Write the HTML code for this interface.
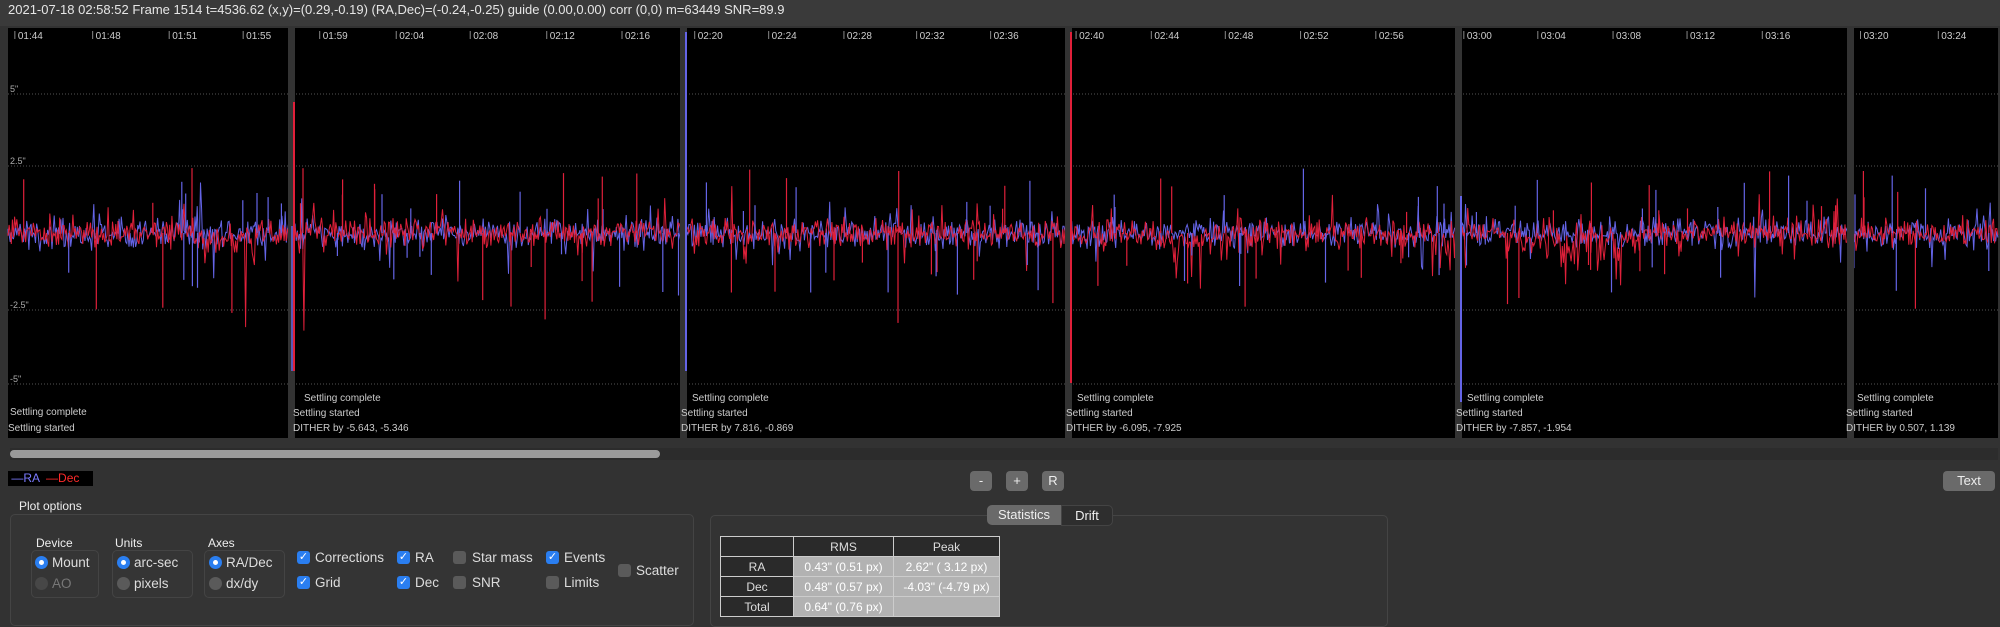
<!DOCTYPE html>
<html><head><meta charset="utf-8"><style>
body{margin:0;width:2000px;height:617px;background:#323232;overflow:hidden;font-family:"Liberation Sans",sans-serif;color:#ddd;position:relative}
.a{position:absolute}
.top{left:0;top:0;width:2000px;height:26px;background:#3a3a3a;font-size:13px;line-height:20px;padding-left:8px;color:#e6e6e6}
.btn{position:absolute;background:#6a6a6a;border-radius:4px;color:#eee;font-size:13px;text-align:center;line-height:20px;height:20px}
.lbl{position:absolute;font-size:12px;color:#eee}
.grp{position:absolute;border:1px solid #444;border-radius:5px;background:#353535}
.rad{position:absolute;width:13px;height:13px;border-radius:50%;background:#2a7ef0}
.rad::after{content:"";position:absolute;left:4px;top:4px;width:5px;height:5px;border-radius:50%;background:#fff}
.rad.off{background:#5a5a5a}.rad.off::after{display:none}
.chk{position:absolute;width:13px;height:13px;border-radius:3px;background:#2a7ef0;color:#fff;font-size:11px;line-height:13px;text-align:center}
.chk.off{background:#5a5a5a}
.t{position:absolute;font-size:13.5px;color:#ddd}
table{position:absolute;left:720px;top:536px;border-collapse:collapse;font-size:12px}
td{border:1px solid #ccc;height:19px;text-align:center;padding:0}
</style></head><body>
<div class="a top">2021-07-18 02:58:52 Frame 1514 t=4536.62 (x,y)=(0.29,-0.19) (RA,Dec)=(-0.24,-0.25) guide (0.00,0.00) corr (0,0) m=63449 SNR=89.9</div>
<svg class="a" style="left:0;top:26px" width="2000" height="420" id="plot"></svg>
<div class="a" style="left:10px;top:448px;width:1988px;height:12px;background:#2c2c2c"></div>
<div class="a" style="left:10px;top:450px;width:650px;height:8px;background:#9a9a9a;border-radius:4px"></div>
<div class="a" style="left:8px;top:471px;width:85px;height:15px;background:#000;font-size:12px;line-height:15px"><span style="color:#7b7bff">&nbsp;—RA</span> <span style="color:#ff2a2a">&nbsp;—Dec</span></div>
<div class="btn" style="left:970px;top:471px;width:22px">-</div>
<div class="btn" style="left:1006px;top:471px;width:22px">+</div>
<div class="btn" style="left:1042px;top:471px;width:22px">R</div>
<div class="btn" style="left:1943px;top:471px;width:52px">Text</div>
<div class="lbl" style="left:19px;top:499px">Plot options</div>
<div class="grp" style="left:10px;top:514px;width:682px;height:110px;background:#343434"></div>
<div class="lbl" style="left:36px;top:536px">Device</div>
<div class="lbl" style="left:115px;top:536px">Units</div>
<div class="lbl" style="left:208px;top:536px">Axes</div>
<div class="grp" style="left:31px;top:550px;width:66px;height:46px"></div>
<div class="grp" style="left:112px;top:550px;width:79px;height:46px"></div>
<div class="grp" style="left:204px;top:550px;width:79px;height:46px"></div>
<div class="rad" style="left:35px;top:556px"></div><div class="t" style="left:52px;top:555px">Mount</div>
<div class="rad off" style="left:35px;top:577px;opacity:.5"></div><div class="t" style="left:52px;top:576px;color:#777">AO</div>
<div class="rad" style="left:117px;top:556px"></div><div class="t" style="left:134px;top:555px">arc-sec</div>
<div class="rad off" style="left:117px;top:577px"></div><div class="t" style="left:134px;top:576px">pixels</div>
<div class="rad" style="left:209px;top:556px"></div><div class="t" style="left:226px;top:555px">RA/Dec</div>
<div class="rad off" style="left:209px;top:577px"></div><div class="t" style="left:226px;top:576px">dx/dy</div>
<div class="chk" style="left:297px;top:551px">✓</div><div class="t" style="left:315px;top:550px">Corrections</div>
<div class="chk" style="left:297px;top:576px">✓</div><div class="t" style="left:315px;top:575px">Grid</div>
<div class="chk" style="left:397px;top:551px">✓</div><div class="t" style="left:415px;top:550px">RA</div>
<div class="chk" style="left:397px;top:576px">✓</div><div class="t" style="left:415px;top:575px">Dec</div>
<div class="chk off" style="left:453px;top:551px"></div><div class="t" style="left:472px;top:550px">Star mass</div>
<div class="chk off" style="left:453px;top:576px"></div><div class="t" style="left:472px;top:575px">SNR</div>
<div class="chk" style="left:546px;top:551px">✓</div><div class="t" style="left:564px;top:550px">Events</div>
<div class="chk off" style="left:546px;top:576px"></div><div class="t" style="left:564px;top:575px">Limits</div>
<div class="chk off" style="left:618px;top:564px"></div><div class="t" style="left:636px;top:563px">Scatter</div>
<div class="grp" style="left:710px;top:515px;width:676px;height:110px;background:#333"></div>
<div class="btn" style="left:987px;top:505px;width:74px;border-radius:5px 0 0 5px;font-size:13px">Statistics</div>
<div class="btn" style="left:1061px;top:505px;width:50px;background:#2e2e2e;border:1px solid #444;border-radius:0 5px 5px 0;height:19px">Drift</div>
<table>
<tr><td style="width:72px;background:#2a2a2a"></td><td style="width:99px;background:#2a2a2a;color:#ddd">RMS</td><td style="width:105px;background:#2a2a2a;color:#ddd">Peak</td></tr>
<tr><td style="background:#2a2a2a">RA</td><td style="background:#b2b2b2;color:#fff">0.43" (0.51 px)</td><td style="background:#b2b2b2;color:#fff">2.62" ( 3.12 px)</td></tr>
<tr><td style="background:#2a2a2a">Dec</td><td style="background:#b2b2b2;color:#fff">0.48" (0.57 px)</td><td style="background:#b2b2b2;color:#fff">-4.03" (-4.79 px)</td></tr>
<tr><td style="background:#2a2a2a">Total</td><td style="background:#b2b2b2;color:#fff">0.64" (0.76 px)</td><td style="background:#b2b2b2"></td></tr>
</table>
<script>
(function(){
var s=document.getElementById('plot'),h='';
h+='<rect x="8" y="2" width="1990" height="410" fill="#000"/>';
[94,166,310,384].forEach(function(y){h+='<line x1="8" x2="1998" y1="'+(y-26)+'" y2="'+(y-26)+'" stroke="#555" stroke-dasharray="1,2"/>';});
var yl=[[94,'5"'],[166,'2.5"'],[310,'-2.5"'],[384,'-5"']];
yl.forEach(function(a){h+='<text x="10" y="'+(a[0]-26-2)+'" fill="#aaa" font-size="9">'+a[1]+'</text>';});
var ticks=[[14,'01:44'],[75,'01:48'],[135,'01:51'],[193,'01:55'],[253,'01:59'],[313,'02:04'],[371,'02:08'],[431,'02:12'],[490,'02:16'],[547,'02:20'],[605,'02:24'],[664,'02:28'],[721,'02:32'],[779,'02:36'],[846,'02:40'],[905,'02:44'],[963,'02:48'],[1022,'02:52'],[1081,'02:56'],[1150,'03:00'],[1208,'03:04'],[1267,'03:08'],[1325,'03:12'],[1384,'03:16'],[1461,'03:20'],[1522,'03:24']];
ticks.forEach(function(t){var x=t[0]*1.2755;h+='<line x1="'+(x-3)+'" x2="'+(x-3)+'" y1="5" y2="13" stroke="#888"/><text x="'+x+'" y="13" fill="#ccc" font-size="10">'+t[1]+'</text>';});
var seed=7;function r(){seed=(seed*16807)%2147483647;return seed/2147483647;}
function g(){return (r()+r()+r()-1.5);}
var cy=207;
function path(col,amp,bias){var d='M8 '+cy;for(var x=8;x<1998;x+=1.1){var v=g()*amp;if(r()<0.07)v*=2.8;if(r()<0.015)v*=2;
var cl=0;[[230,25],[1580,60],[1200,30],[1450,20],[1180,25]].forEach(function(c){if(Math.abs(x-c[0])<c[1]&&r()<0.5)cl=1;});
if(cl&&bias)v=Math.abs(v)*2.4;d+='L'+x.toFixed(1)+' '+(cy+v).toFixed(1);}return '<path d="'+d+'" fill="none" stroke="'+col+'" stroke-width="1"/>';}
h+=path('#6464e6',14,0);h+=path('#e0203a',14,1);
// extra spikes
for(var i=0;i<140;i++){var x=10+r()*1985;var up=r()<0.5;var L=20+r()*45;var col=r()<0.5?'#6464e6':'#e0203a';
if(col=='#e0203a'&&!up)L*=1.4;h+='<line x1="'+x.toFixed(1)+'" x2="'+x.toFixed(1)+'" y1="'+cy+'" y2="'+(up?cy-L:cy+L).toFixed(1)+'" stroke="'+col+'" stroke-width="1.2"/>';}
[292,684,1069,1459,1851].forEach(function(x){h+='<rect x="'+(x-4)+'" y="0" width="7" height="412" fill="#333"/>';});
h+='<line x1="294" x2="294" y1="76" y2="345" stroke="#e0203a" stroke-width="2"/>';
h+='<line x1="686" x2="686" y1="6" y2="345" stroke="#6464e6" stroke-width="2"/>';
h+='<line x1="1071" x2="1071" y1="6" y2="357" stroke="#e0203a" stroke-width="2"/>';
h+='<line x1="1461" x2="1461" y1="170" y2="376" stroke="#6464e6" stroke-width="2"/>';
h+='<line x1="292" x2="292" y1="200" y2="345" stroke="#6464e6" stroke-width="1.5"/>';
function tx(x,y,t){h+='<text x="'+x+'" y="'+(y-26)+'" fill="#ccc" font-size="10">'+t+'</text>';}
tx(10,415,'Settling complete');tx(8,431,'Settling started');
var ev=[[296,'-5.643, -5.346'],[684,'7.816, -0.869'],[1069,'-6.095, -7.925'],[1459,'-7.857, -1.954'],[1849,'0.507, 1.139']];
ev.forEach(function(e){var x=e[0];tx(x+8,401,'Settling complete');tx(x-3,416,'Settling started');tx(x-3,431,'DITHER by '+e[1]);});
s.innerHTML=h;})();
</script>
</body></html>
